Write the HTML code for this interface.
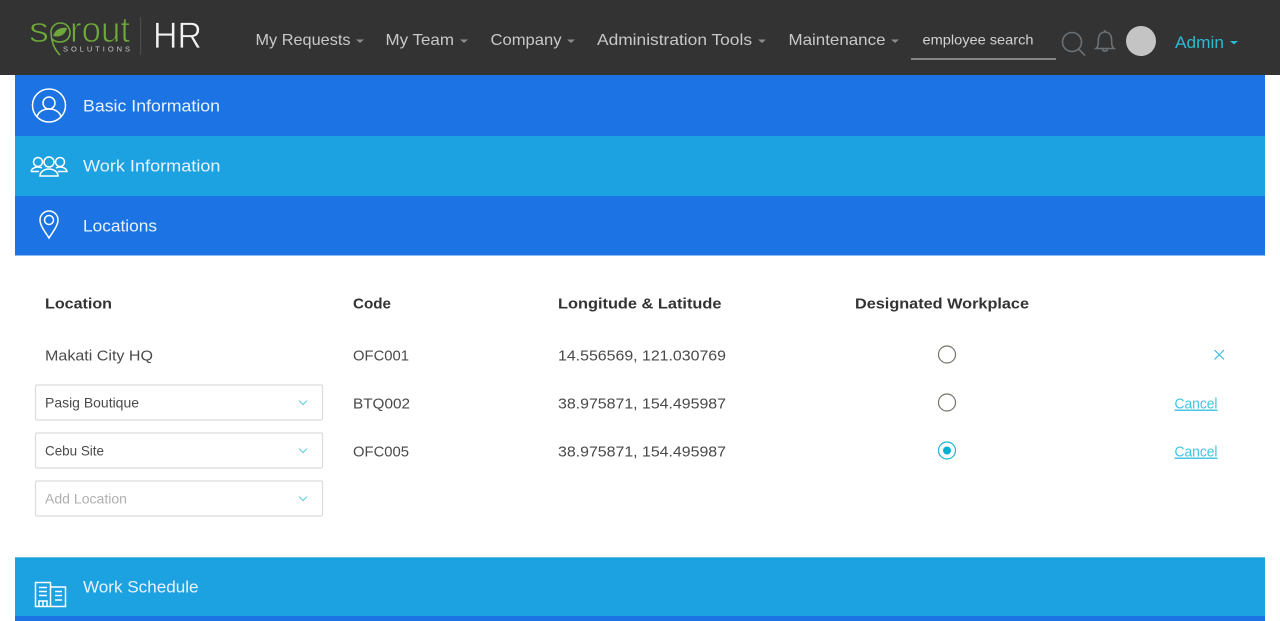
<!DOCTYPE html>
<html><head><meta charset="utf-8"><title>Locations</title>
<style>
html,body{margin:0;padding:0;background:#fff;width:1280px;height:621px;overflow:hidden}
svg{display:block}
text{font-family:"Liberation Sans",sans-serif}
</style></head><body>
<svg width="1280" height="621" viewBox="0 0 1280 621" xmlns="http://www.w3.org/2000/svg">
<rect width="1280" height="621" fill="#fff"/>
<rect width="1280" height="75" fill="#333"/>
<!-- logo -->
<g fill="#6fa83a" stroke="#333" stroke-width=".9">
<text x="29" y="42" font-size="36" textLength="20" lengthAdjust="spacingAndGlyphs">s</text>
<text x="70" y="42" font-size="36" textLength="60" lengthAdjust="spacingAndGlyphs">rout</text>
</g>
<path d="M51 31C52 26 56 23 60 23C66 23 70 27 70 33C70 38 66 42 60 42C57 42 54 41 52 39M51 31C51 41 54 49 60 55" fill="none" stroke="#6fa83a" stroke-width="1.600"/>
<path d="M53 36C55 30 60 27 67 28C66 34 60 38 53 36Z" fill="#6fa83a"/>
<text x="63" y="51.500" font-size="7.500" fill="#c9c9c9" textLength="67">SOLUTIONS</text>
<rect x="140" y="17" width="1.200" height="38" fill="#4c4c4c"/>
<text x="153" y="48" font-size="37" fill="#f2f2f2" stroke="#333" stroke-width=".7" textLength="49" lengthAdjust="spacingAndGlyphs">HR</text>
<!-- nav -->
<g font-size="16" fill="#c8c8c8">
<text x="255.500" y="45" textLength="95" lengthAdjust="spacingAndGlyphs">My Requests</text>
<text x="385.500" y="45" textLength="68.500" lengthAdjust="spacingAndGlyphs">My Team</text>
<text x="490.500" y="45" textLength="71" lengthAdjust="spacingAndGlyphs">Company</text>
<text x="597" y="45" textLength="155" lengthAdjust="spacingAndGlyphs">Administration Tools</text>
<text x="788.500" y="45" textLength="97" lengthAdjust="spacingAndGlyphs">Maintenance</text>
</g>
<g fill="#8c8c8c">
<path d="M356 39.500h8l-4 3.500z"/><path d="M460 39.500h8l-4 3.500z"/><path d="M567 39.500h8l-4 3.500z"/><path d="M758 39.500h8l-4 3.500z"/><path d="M891 39.500h8l-4 3.500z"/>
</g>
<text x="922.500" y="44.500" font-size="14" fill="#d2d2d2" textLength="111" lengthAdjust="spacingAndGlyphs">employee search</text>
<rect x="911" y="58" width="145" height="2" fill="#858585"/>
<g fill="none" stroke="#6b7175" stroke-width="1.600">
<circle cx="1072" cy="42" r="9.500"/>
<path d="M1078.500 49L1085 55.500"/>
<path d="M1096 48.500c3-2.500 2-6 2.500-10c.5-4 3-6.500 6.500-6.500s6 2.500 6.500 6.500c.5 4-.5 7.500 2.500 10zM1102.500 49.500c.5 2 4.500 2 5 0M1105 32v-2"/>
</g>
<circle cx="1141" cy="41" r="15" fill="#c4c4c4"/>
<text x="1175" y="48" font-size="16.500" fill="#2cbad3" textLength="49" lengthAdjust="spacingAndGlyphs">Admin</text>
<path d="M1230 41h8l-4 3.500z" fill="#2cbad3"/>
<!-- bands -->
<rect x="15" y="75" width="1250" height="61" fill="#1c73e3"/>
<rect x="15" y="136" width="1250" height="60" fill="#1ca1e1"/>
<rect x="15" y="196" width="1250" height="59" fill="#1c73e3"/>
<rect x="15" y="255" width="1250" height="1" fill="#8db9f1"/>
<rect x="15" y="557" width="1250" height="59" fill="#1ca1e1"/>
<rect x="15" y="557" width="1250" height="1" fill="#5cbcea"/>
<rect x="15" y="616" width="1250" height="5" fill="#1c73e3"/>
<g font-size="17" fill="#e8f3fd">
<text x="83" y="111.500" textLength="137" lengthAdjust="spacingAndGlyphs">Basic Information</text>
<text x="83" y="171.500" textLength="137.500" lengthAdjust="spacingAndGlyphs">Work Information</text>
<text x="83" y="231.500" textLength="74" lengthAdjust="spacingAndGlyphs">Locations</text>
<text x="83" y="592.500" textLength="115.500" lengthAdjust="spacingAndGlyphs">Work Schedule</text>
</g>
<!-- band icons -->
<g fill="none" stroke="#fff" stroke-width="1.500">
<circle cx="49" cy="105.500" r="16.500"/>
<circle cx="49" cy="103" r="6"/>
<path d="M37 117c1-5 6-8 12-8s11 3 12 8"/>
<circle cx="38" cy="162" r="4.500"/><circle cx="49" cy="162" r="5"/><circle cx="60" cy="162" r="4.500"/>
<path d="M31 171.500c.5-3 4-4.500 7-4.500 2 0 3 .5 4 1M56 168c1-.5 2-1 4-1 3 0 6.500 1.500 7 4.500H58M31 171.500h8M40 176c0-4 4-7 9-7s9 3 9 7z"/>
<path d="M49 238.500c-3-5-9-12-9-18a9 9 0 0 1 18 0c0 6-6 13-9 18z" transform="translate(0,-.5)"/>
<circle cx="49" cy="220" r="4.500"/>
<path d="M35.500 606.500v-24h15v24zM50.500 587h15v19.500h-15zM39 587.500h8M39 591.500h8M39 595.500h8M39 606v-5h8v5M43 601v5M55 591.500h7M55 595.500h7M55 600h7"/>
</g>
<!-- table -->
<g font-size="15" font-weight="bold" fill="#333">
<text x="45" y="308.500" textLength="67" lengthAdjust="spacingAndGlyphs">Location</text>
<text x="353" y="308.500" textLength="38" lengthAdjust="spacingAndGlyphs">Code</text>
<text x="558" y="308.500" textLength="163.500" lengthAdjust="spacingAndGlyphs">Longitude &amp; Latitude</text>
<text x="855" y="308.500" textLength="174" lengthAdjust="spacingAndGlyphs">Designated Workplace</text>
</g>
<g font-size="15" fill="#4a4a4a">
<text x="45" y="360.500" textLength="108" lengthAdjust="spacingAndGlyphs">Makati City HQ</text>
<text x="353" y="360.500" textLength="56" lengthAdjust="spacingAndGlyphs">OFC001</text>
<text x="558" y="360.500" textLength="168" lengthAdjust="spacingAndGlyphs">14.556569, 121.030769</text>
<text x="353" y="408.500" textLength="57" lengthAdjust="spacingAndGlyphs">BTQ002</text>
<text x="558" y="408.500" textLength="168" lengthAdjust="spacingAndGlyphs">38.975871, 154.495987</text>
<text x="353" y="456.500" textLength="56" lengthAdjust="spacingAndGlyphs">OFC005</text>
<text x="558" y="456.500" textLength="168" lengthAdjust="spacingAndGlyphs">38.975871, 154.495987</text>
</g>
<!-- selects -->
<g fill="#fff" stroke="#dcdcdc" stroke-width="1.200">
<rect x="35.500" y="385" width="287" height="35" rx="1.500"/>
<rect x="35.500" y="433" width="287" height="35" rx="1.500"/>
<rect x="35.500" y="481" width="287" height="35" rx="1.500"/>
</g>
<text x="45" y="407.500" font-size="14" fill="#4a4a4a" textLength="94" lengthAdjust="spacingAndGlyphs">Pasig Boutique</text>
<text x="45" y="455.500" font-size="14" fill="#4a4a4a" textLength="59" lengthAdjust="spacingAndGlyphs">Cebu Site</text>
<text x="45" y="503.500" font-size="14" fill="#b0b0b0" textLength="82" lengthAdjust="spacingAndGlyphs">Add Location</text>
<g fill="none" stroke="#5cc8e6" stroke-width="1">
<path d="M299 400.500l4 4 4-4"/><path d="M299 448.500l4 4 4-4"/><path d="M299 496.500l4 4 4-4"/>
</g>
<path d="M1214.500 350l9.500 9.500M1224 350l-9.500 9.500" fill="none" stroke="#2fbcdc" stroke-width="1.100"/>
<!-- radios -->
<g fill="#fff" stroke="#77736c" stroke-width="1.200">
<circle cx="947" cy="354.500" r="8.500"/>
<circle cx="947" cy="402.500" r="8.500"/>
</g>
<circle cx="947" cy="450.500" r="8.500" fill="#fff" stroke="#1db4d3" stroke-width="1.200"/>
<circle cx="947" cy="450.500" r="4" fill="#04b1d1"/>
<g font-size="14.500" fill="#43c3e4" text-decoration="underline">
<text x="1174.500" y="408.500" textLength="43" lengthAdjust="spacingAndGlyphs">Cancel</text>
<text x="1174.500" y="456.500" textLength="43" lengthAdjust="spacingAndGlyphs">Cancel</text>
</g>
</svg>
</body></html>
